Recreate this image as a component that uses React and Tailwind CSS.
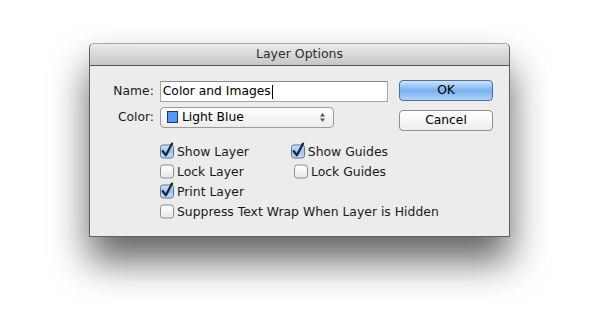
import React from "react";

const font = { fontFamily: '"DejaVu Sans", "Noto Sans", sans-serif' };

function Check({ checked }) {
  return (
    <svg width="16" height="17" viewBox="0 0 16 17" className="shrink-0">
      <defs>
        <linearGradient id="cbu" x1="0" y1="0" x2="0" y2="1">
          <stop offset="0" stopColor="#ffffff" />
          <stop offset="1" stopColor="#e6e6e6" />
        </linearGradient>
        <linearGradient id="cbc" x1="0" y1="0" x2="0" y2="1">
          <stop offset="0" stopColor="#d3e4f8" />
          <stop offset="0.5" stopColor="#9cc2ef" />
          <stop offset="1" stopColor="#c6dcf6" />
        </linearGradient>
      </defs>
      <rect
        x="1.5"
        y="3"
        width="13"
        height="13"
        rx="2.5"
        fill={checked ? "url(#cbc)" : "url(#cbu)"}
        stroke={checked ? "#5f7796" : "#8e8e8e"}
      />
      {checked && (
        <path
          d="M3.8 9.2 L6.9 13.2 L13 1.6"
          fill="none"
          stroke="#1b2a44"
          strokeWidth="2.3"
          strokeLinecap="round"
          strokeLinejoin="round"
        />
      )}
    </svg>
  );
}

function CB({ checked, label }) {
  return (
    <div className="flex items-center h-[20px]">
      <div className="ml-[-2px] mt-[-3px]">
        <Check checked={checked} />
      </div>
      <span className="ml-[2px] text-[12.4px] text-[#1a1a1a] whitespace-nowrap">{label}</span>
    </div>
  );
}

export default function App() {
  return (
    <div className="w-[600px] h-[309px] bg-white overflow-hidden pt-[43px] pl-[89px]" style={font}>
      <div className="w-[421px] h-[194px] flex flex-col bg-[#ececec] rounded-t-[5px] border border-[#5f5f5f] border-t-[#a8a8a8] shadow-[0_24px_38px_rgba(0,0,0,0.62)]">
        <div className="h-[22px] shrink-0 flex items-center justify-center rounded-t-[5px] bg-gradient-to-b from-[#ebebeb] to-[#c6c6c6] border-b border-[#555555] text-[12.5px] text-[#2e2e2e]">
          Layer Options
        </div>
        <div className="flex flex-1">
          <div className="w-[298px] shrink-0 flex flex-col pt-[15px]">
            <div className="flex items-center h-[21px]">
              <span className="w-[64px] text-right text-[12.3px] text-[#1a1a1a]">Name:</span>
              <div className="ml-[6px] w-[229px] h-[21px] bg-white border border-[#a6a6a6] border-t-[#8a8a8a] flex items-center pl-[2px] text-[12.3px] text-black">
                Color and Images
                <span className="inline-block w-[1px] h-[14px] bg-black ml-[1px]" />
              </div>
            </div>
            <div className="flex items-center h-[20px] mt-[5px]">
              <span className="w-[64px] text-right text-[12.3px] text-[#1a1a1a]">Color:</span>
              <div className="ml-[6px] w-[174px] h-[21px] rounded-[4px] border border-[#9a9a9a] bg-gradient-to-b from-[#ffffff] to-[#ececec] flex items-center pl-[6px] pr-[7px] text-[12.3px] text-black">
                <span className="w-[11px] h-[12px] bg-[#5599f5] border border-[#1f3a66] mr-[4px]" />
                <span>Light Blue</span>
                <svg width="7" height="11" viewBox="0 0 7 11" className="ml-auto">
                  <path d="M3.5 1 L6 4.5 L1 4.5 Z" fill="#555" />
                  <path d="M3.5 10 L6 6.5 L1 6.5 Z" fill="#555" />
                </svg>
              </div>
            </div>
            <div className="ml-[71px] mt-[15px] flex flex-col">
              <div className="flex">
                <div className="w-[134px]"><CB checked label="Show Layer" /></div>
                <CB checked label="Show Guides" />
              </div>
              <div className="flex">
                <div className="w-[134px]"><CB label="Lock Layer" /></div>
                <CB label="Lock Guides" />
              </div>
              <CB checked label="Print Layer" />
              <CB label="Suppress Text Wrap When Layer is Hidden" />
            </div>
          </div>
          <div className="flex flex-col pt-[14px] ml-[11px]">
            <button className="w-[94px] h-[21px] rounded-[4px] border border-[#4c6f9f] bg-gradient-to-b from-[#cfe3fa] via-[#79b1f0] to-[#aed2f7] text-[12.3px] text-black flex items-center justify-center">
              OK
            </button>
            <button className="mt-[9px] w-[94px] h-[21px] rounded-[4px] border border-[#8f8f8f] bg-gradient-to-b from-[#ffffff] to-[#eeeeee] text-[12.3px] text-black flex items-center justify-center">
              Cancel
            </button>
          </div>
        </div>
      </div>
    </div>
  );
}
